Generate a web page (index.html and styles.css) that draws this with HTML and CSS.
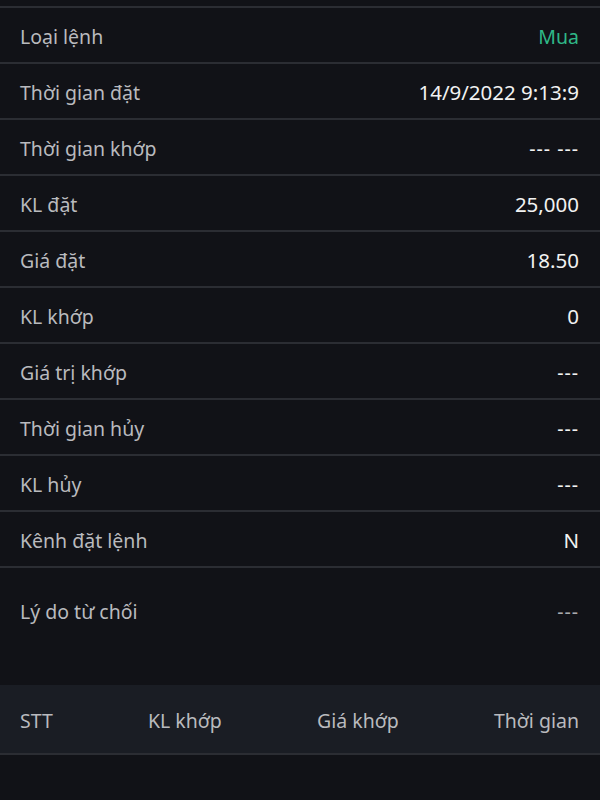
FILE: index.html
```html
<!DOCTYPE html>
<html lang="vi">
<head>
    <meta charset="UTF-8">
    <meta name="viewport" content="width=device-width, initial-scale=1.0">
    <title>Chi tiết lệnh</title>
    <link rel="stylesheet" href="styles.css">
</head>
<body>
    <div class="details">
        <div class="row"><span class="label">Loại lệnh</span><span class="value buy">Mua</span></div>
        <div class="row"><span class="label">Thời gian đặt</span><span class="value">14/9/2022 9:13:9</span></div>
        <div class="row"><span class="label">Thời gian khớp</span><span class="value dash">--- ---</span></div>
        <div class="row"><span class="label">KL đặt</span><span class="value">25,000</span></div>
        <div class="row"><span class="label">Giá đặt</span><span class="value">18.50</span></div>
        <div class="row"><span class="label">KL khớp</span><span class="value">0</span></div>
        <div class="row"><span class="label">Giá trị khớp</span><span class="value dash">---</span></div>
        <div class="row"><span class="label">Thời gian hủy</span><span class="value dash">---</span></div>
        <div class="row"><span class="label">KL hủy</span><span class="value dash">---</span></div>
        <div class="row"><span class="label">Kênh đặt lệnh</span><span class="value">N</span></div>
        <div class="row reason"><span class="label">Lý do từ chối</span><span class="value dash muted">---</span></div>
    </div>

    <div class="matchHeader">
        <span>STT</span>
        <span>KL khớp</span>
        <span>Giá khớp</span>
        <span>Thời gian</span>
    </div>
</body>
</html>
```

FILE: styles.css
```css
* {
    font-family: "Noto Sans", sans-serif;
    box-sizing: border-box;
}

body {
    margin: 0;
    padding-top: 6px;
    height: 800px;
    background-color: #111217;
    color: #b9babe;
    font-size: 19.5px;
    overflow: hidden;
}

.details {
    border-top: 2px solid #2b2d33;
}

.row {
    display: flex;
    justify-content: space-between;
    align-items: center;
    height: 56px;
    padding: 2px 21px 0 20px;
    border-bottom: 2px solid #2b2d33;
}

.value {
    color: #f2f2f2;
    font-size: 20.5px;
}

.buy {
    color: #2fb887;
    font-size: 19.5px;
}

.dash {
    letter-spacing: 1px;
    font-size: 19.5px;
}

.muted {
    color: #a9aaae;
}

.reason {
    height: 117px;
    align-items: flex-start;
    padding-top: 30px;
    border-bottom: none;
}

.matchHeader {
    display: flex;
    justify-content: space-between;
    align-items: center;
    height: 70px;
    padding: 2px 21px 0 20px;
    background-color: #1a1d24;
    border-bottom: 2px solid #2b2d33;
}
```
